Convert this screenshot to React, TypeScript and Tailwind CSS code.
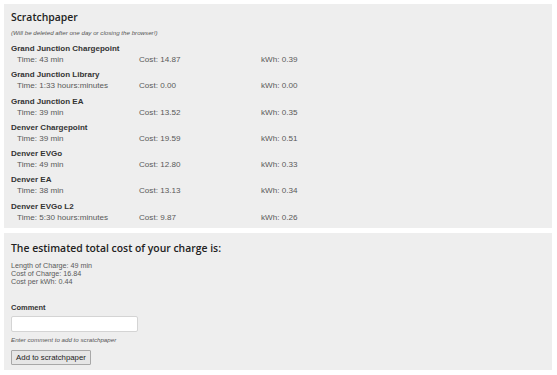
import { useState } from "react";

interface Entry {
  name: string;
  time: string;
  cost: string;
  kwh: string;
}

const entries: Entry[] = [
  { name: "Grand Junction Chargepoint", time: "43 min", cost: "14.87", kwh: "0.39" },
  { name: "Grand Junction Library", time: "1:33 hours:minutes", cost: "0.00", kwh: "0.00" },
  { name: "Grand Junction EA", time: "39 min", cost: "13.52", kwh: "0.35" },
  { name: "Denver Chargepoint", time: "39 min", cost: "19.59", kwh: "0.51" },
  { name: "Denver EVGo", time: "49 min", cost: "12.80", kwh: "0.33" },
  { name: "Denver EA", time: "38 min", cost: "13.13", kwh: "0.34" },
  { name: "Denver EVGo L2", time: "5:30 hours:minutes", cost: "9.87", kwh: "0.26" },
];

export default function App() {
  const [comment, setComment] = useState("");

  return (
    <div className="w-[557px] min-h-screen bg-white px-[4px] pt-[4px] font-['Liberation_Sans',Arial,sans-serif]">
      <div className="w-[548px] bg-[#eeeeee] px-[7px] pt-[6px] pb-[5.5px]">
        <h2 className="font-['Open_Sans',sans-serif] font-semibold text-[10.4px] leading-[14px] text-[#222222]">
          Scratchpaper
        </h2>
        <p className="mt-[5px] italic text-[6.2px] leading-[8px] text-[#555555]">
          (Will be deleted after one day or closing the browser!)
        </p>
        <div className="mt-[6px]">
          {entries.map((e) => (
            <div key={e.name} className="mb-[4.25px] last:mb-0">
              <div className="font-bold text-[8px] leading-[11px] text-[#333333]">{e.name}</div>
              <div className="grid grid-cols-[122px_122px_auto] pl-[6px] text-[8.1px] leading-[11px] text-[#595959]">
                <span>Time: {e.time}</span>
                <span>Cost: {e.cost}</span>
                <span>kWh: {e.kwh}</span>
              </div>
            </div>
          ))}
        </div>
      </div>

      <div className="mt-[4.5px] w-[548px] bg-[#eeeeee] px-[7px] pt-[8px] pb-[5px]">
        <h2 className="font-['Open_Sans',sans-serif] font-semibold text-[10.4px] leading-[14px] text-[#222222]">
          The estimated total cost of your charge is:
        </h2>
        <div className="mt-[7px] text-[7.2px] leading-[8.3px] text-[#595959]">
          <div>Length of Charge: 49 min</div>
          <div>Cost of Charge: 16.84</div>
          <div>Cost per kWh: 0.44</div>
        </div>
        <label className="mt-[16.6px] block font-bold text-[7.5px] leading-[10px] text-[#333333]">Comment</label>
        <input
          type="text"
          value={comment}
          onChange={(e) => setComment(e.target.value)}
          className="mt-[3px] block w-[127px] h-[16px] bg-white border border-[#d4d4d4] rounded-[2px] px-1 text-[8px] outline-none"
        />
        <p className="mt-[4.5px] italic text-[6.2px] leading-[8px] text-[#555555]">
          Enter comment to add to scratchpaper
        </p>
        <button className="mt-[5.5px] block h-[15px] w-[80px] bg-[#e6e6e6] border border-[#a8a8a8] rounded-[1px] text-[7.8px] leading-[13px] text-[#222222]">
          Add to scratchpaper
        </button>
      </div>
    </div>
  );
}
